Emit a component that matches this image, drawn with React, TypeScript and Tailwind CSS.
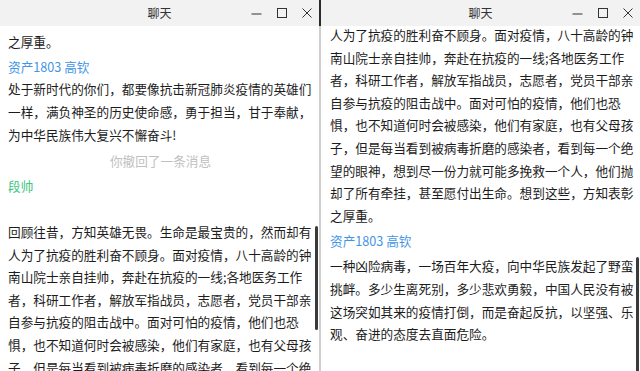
import React from 'react';

type Line =
  | { kind: 'name'; text: string; color: string }
  | { kind: 'body'; text: string; gap?: string }
  | { kind: 'notice'; text: string };

const BLUE = 'text-[#3f95e6]';
const GREEN = 'text-[#3cc585]';

const MSG_A =
  '处于新时代的你们，都要像抗击新冠肺炎疫情的英雄们一样，满负神圣的历史使命感，勇于担当，甘于奉献，为中华民族伟大复兴不懈奋斗!';
const MSG_B =
  '回顾往昔，方知英雄无畏。生命是最宝贵的，然而却有人为了抗疫的胜利奋不顾身。面对疫情，八十高龄的钟南山院士亲自挂帅，奔赴在抗疫的一线;各地医务工作者，科研工作者，解放军指战员，志愿者，党员干部亲自参与抗疫的阻击战中。面对可怕的疫情，他们也恐惧，也不知道何时会被感染，他们有家庭，也有父母孩子，但是每当看到被病毒折磨的感染者，看到每一个绝望的眼神，想到尽一份力就可能多挽救一个人，他们抛却了所有牵挂，甚至愿付出生命。想到这些，方知表彰之厚重。';
const MSG_C =
  '一种凶险病毒，一场百年大疫，向中华民族发起了野蛮挑衅。多少生离死别，多少悲欢勇毅，中国人民没有被这场突如其来的疫情打倒，而是奋起反抗，以坚强、乐观、奋进的态度去直面危险。';

const leftLines: Line[] = [
  { kind: 'body', text: '之厚重。' },
  { kind: 'name', text: '资产1803 高钦', color: BLUE },
  { kind: 'body', text: MSG_A },
  { kind: 'notice', text: '你撤回了一条消息' },
  { kind: 'name', text: '段帅', color: GREEN },
  { kind: 'body', text: '\n' + MSG_B, gap: 'mt-[1px]' },
];

const rightLines: Line[] = [
  { kind: 'body', text: MSG_B.slice(MSG_B.indexOf('人为了')) },
  { kind: 'name', text: '资产1803 高钦', color: BLUE },
  { kind: 'body', text: MSG_C, gap: 'mt-[3px]' },
];

function TitleBar() {
  return (
    <div className="grid h-[26px] grid-cols-[1fr_auto_1fr] items-center bg-[#f2f2f2]">
      <div />
      <div className="text-[12px] text-[#333]">聊天</div>
      <div className="flex justify-end">
        <button className="flex h-[26px] w-[25px] items-center justify-center">
          <svg width="11" height="11" viewBox="0 0 11 11">
            <line x1="0.5" y1="6" x2="10.5" y2="6" stroke="#333" strokeWidth="1" />
          </svg>
        </button>
        <button className="flex h-[26px] w-[25px] items-center justify-center">
          <svg width="10" height="10" viewBox="0 0 10 10">
            <rect x="0.5" y="0.5" width="9" height="9" fill="none" stroke="#333" strokeWidth="1" />
          </svg>
        </button>
        <button className="flex h-[26px] w-[25px] items-center justify-center">
          <svg width="10" height="10" viewBox="0 0 10 10">
            <path d="M0.5 0.5 L9.5 9.5 M9.5 0.5 L0.5 9.5" stroke="#333" strokeWidth="1" />
          </svg>
        </button>
      </div>
    </div>
  );
}

function ChatLines({ lines }: { lines: Line[] }) {
  return (
    <>
      {lines.map((l, i) => {
        if (l.kind === 'name') {
          return (
            <div key={i} className={`mt-[2.5px] ${l.color}`}>
              {l.text}
            </div>
          );
        }
        if (l.kind === 'notice') {
          return (
            <div key={i} className="mt-[3.5px] text-center text-[#c0c0c0]">
              {l.text}
            </div>
          );
        }
        return (
          <div key={i} className={`whitespace-pre-wrap text-[#1c1c1c] ${l.gap ?? ''}`}>
            {l.text}
          </div>
        );
      })}
    </>
  );
}

function ChatWindow({
  lines,
  offset,
  pad,
  thumb,
}: {
  lines: Line[];
  offset: string;
  pad: string;
  thumb: string;
}) {
  return (
    <div className="flex h-full w-[319px] flex-col bg-white">
      <TitleBar />
      <div className="relative flex-1 overflow-hidden">
        <div className={`${offset} ${pad} w-[305px] text-[12.65px] leading-[22.6px]`}>
          <ChatLines lines={lines} />
        </div>
        <div className={`absolute right-[1px] w-[3px] rounded-sm bg-[#3a3a3a] ${thumb}`} />
      </div>
    </div>
  );
}

export default function App() {
  return (
    <div
      className="flex h-[371px] w-[640px] flex-col overflow-hidden bg-[#2a2a2a]"
      style={{ fontFamily: '"Noto Sans CJK SC", "Noto Sans", sans-serif' }}
    >
      <div className="h-[1px] bg-[#1e1e1e]" />
      <div className="flex flex-1">
        <ChatWindow lines={leftLines} offset="pt-[4.7px]" pad="ml-[8px]" thumb="top-[200px] h-[104px]" />
        <div className="flex w-[2px] flex-col">
          <div className="h-[26px] bg-[#2a2a2a]" />
          <div className="flex-1 bg-[#cfcfcf]" />
        </div>
        <ChatWindow lines={rightLines} offset="-mt-[2px]" pad="ml-[9px]" thumb="top-[231px] h-[120px]" />
      </div>
    </div>
  );
}
